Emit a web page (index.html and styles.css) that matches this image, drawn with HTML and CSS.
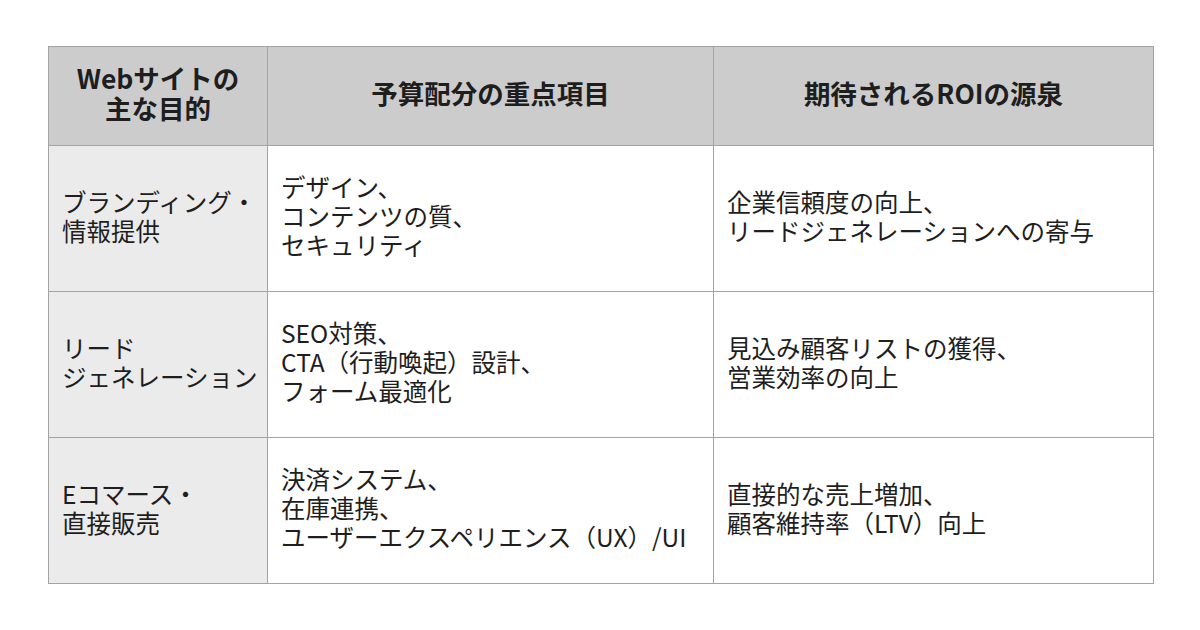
FILE: index.html
```html
<!DOCTYPE html>
<html lang="ja">
<head>
<meta charset="utf-8">
<link rel="stylesheet" href="styles.css">
</head>
<body>
<table class="roi">
  <colgroup>
    <col class="c1"><col class="c2"><col class="c3">
  </colgroup>
  <thead>
    <tr class="head">
      <th>Webサイトの<br>主な目的</th>
      <th>予算配分の重点項目</th>
      <th>期待されるROIの源泉</th>
    </tr>
  </thead>
  <tbody>
    <tr class="row">
      <td class="label">ブランディング・<br>情報提供</td>
      <td>デザイン、<br>コンテンツの質、<br>セキュリティ</td>
      <td>企業信頼度の向上、<br>リードジェネレーションへの寄与</td>
    </tr>
    <tr class="row">
      <td class="label">リード<br>ジェネレーション</td>
      <td>SEO対策、<br>CTA（行動喚起）設計、<br>フォーム最適化</td>
      <td>見込み顧客リストの獲得、<br>営業効率の向上</td>
    </tr>
    <tr class="row">
      <td class="label">Eコマース・<br>直接販売</td>
      <td>決済システム、<br>在庫連携、<br>ユーザーエクスペリエンス（UX）/UI</td>
      <td>直接的な売上増加、<br>顧客維持率（LTV）向上</td>
    </tr>
  </tbody>
</table>
</body>
</html>
```
FILE: styles.css
```css
html, body {
  margin: 0;
  padding: 0;
  background: #ffffff;
}
body {
  padding: 46px 48px;
  font-family: "Noto Sans CJK JP", "Noto Sans", sans-serif;
  color: #1e1e1e;
}
.roi {
  border-collapse: collapse;
  width: 1105px;
  table-layout: fixed;
}
.c1 { width: 219px; }
.c2 { width: 446px; }
.c3 { width: 440px; }
.roi th, .roi td {
  border: 1px solid #a3a3a3;
  vertical-align: middle;
}
.roi th {
  background: #cccccc;
  font-size: 26.5px;
  font-weight: 700;
  line-height: 30px;
  text-align: center;
  padding: 0 6px 6px;
}
.head { height: 99px; }
.row { height: 146px; }
.roi td {
  font-size: 24.5px;
  font-weight: 400;
  line-height: 29px;
  text-align: left;
  padding: 0 6px 6px 13px;
}
.roi td.label {
  background: #ebebeb;
}
```
